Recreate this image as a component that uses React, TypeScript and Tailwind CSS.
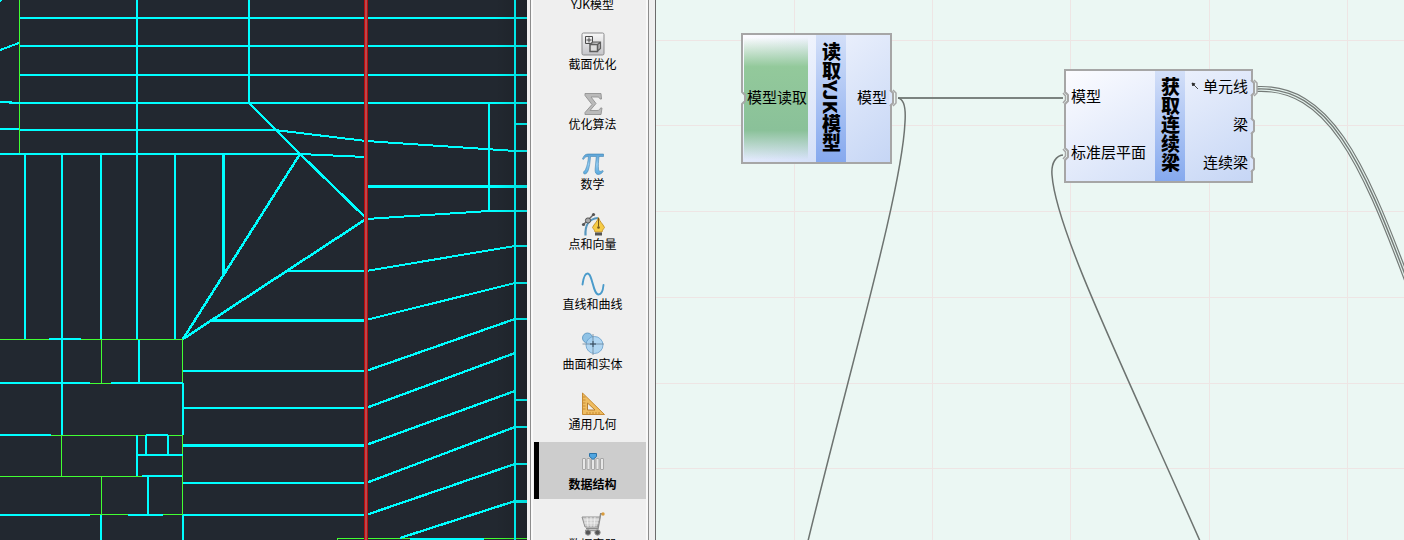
import type { ReactNode } from "react";

type Segment = [number, number, number, number, number?];

const cyanLines: Segment[] = [
  [20, 18, 527, 18], [20, 46, 527, 46], [20, 75, 527, 75], [9, 103, 527, 103], [0, 102, 12, 102],
  [0, 129, 19, 129], [20, 130, 275, 130], [0, 154, 300, 154],
  [25, 154, 25, 339], [62, 154, 62, 435], [101, 154, 101, 339], [137, 0, 137, 339], [175, 154, 175, 339],
  [223.5, 154, 223.5, 274, 3], [249, 0, 249, 103],
  [0, 50, 19, 43], [0, 1, 2, 0],
  [249, 103, 300, 154, 2.5], [300, 154, 366, 218, 2.5], [275, 130, 366, 141], [366, 141, 515, 151], [515, 151, 527, 151],
  [300, 154, 366, 157], [183, 339, 300, 154, 2.5], [183, 339, 366, 219, 2.5],
  [287, 271, 366, 271], [366, 271, 515, 246], [515, 246, 527, 246],
  [211, 320.5, 366, 320.5, 3], [366, 320, 515, 283], [515, 283, 527, 283],
  [183, 371, 366, 371], [366, 371, 515, 319, 2.3], [515, 319, 527, 319],
  [183, 408, 366, 408], [366, 408, 515, 353, 2.3],
  [183, 445.5, 366, 445.5, 3], [366, 445, 515, 391, 2.3], [515, 400, 527, 400],
  [183, 483, 366, 483], [366, 483, 515, 427, 2.3], [515, 427, 527, 427],
  [183, 515, 366, 515], [366, 515, 515, 464, 2.3], [515, 464, 527, 464],
  [400, 538, 515, 501, 2.3], [515, 501.5, 527, 501.5, 3],
  [515, 0, 515, 540], [489, 103, 489, 211], [515, 124, 527, 124], [367, 186.5, 527, 186.5, 3],
  [366, 219, 489, 211], [489, 211, 527, 211],
  [49, 339, 81, 339], [139, 340, 139, 383], [0, 383, 90, 383], [111, 383, 183, 383], [183, 383, 183, 435],
  [0, 435, 51, 435], [146, 435, 168, 435], [146, 435, 146, 455], [168, 435, 168, 455], [137, 435, 137, 476],
  [137, 455, 183, 455], [142, 476, 182, 476], [148, 476, 148, 515], [0, 515, 90, 515], [128, 515, 163, 515],
  [101, 515, 101, 540], [183, 515, 183, 540], [410, 539, 484, 539],
];

const greenLines: Segment[] = [
  [19.5, 0, 19.5, 153], [0, 339.5, 183, 339.5], [101.5, 339, 101.5, 383], [182.5, 339, 182.5, 383],
  [90, 383.5, 111, 383.5], [51, 435.5, 183, 435.5], [61.5, 435, 61.5, 476], [182.5, 435, 182.5, 515],
  [0, 476.5, 142, 476.5], [101.5, 476, 101.5, 515], [0, 514.5, 183, 514.5], [337, 538.5, 527, 538.5],
  [337.5, 538, 337.5, 540],
];

function DrawingView() {
  return (
    <section aria-label="CAD" className="relative min-w-0 flex-[527] overflow-hidden bg-[#222830]">
      <svg className="block h-full w-full" shapeRendering="crispEdges">
        <g stroke="#42ff32" strokeWidth="1">
          {greenLines.map(([x1, y1, x2, y2], i) => (
            <line key={i} x1={x1} y1={y1} x2={x2} y2={y2} />
          ))}
        </g>
        <g stroke="#00ffff">
          {cyanLines.map(([x1, y1, x2, y2, w], i) => (
            <line key={i} x1={x1} y1={y1} x2={x2} y2={y2} strokeWidth={w ?? 2} />
          ))}
        </g>
        <rect x="364" y="0" width="4" height="100%" fill="#bd0a0c" />
        <rect x="365" y="0" width="2" height="100%" fill="#b8494c" />
      </svg>
      <div className="absolute inset-y-0 right-0 w-8 bg-linear-to-r from-transparent to-black/15" />
    </section>
  );
}

const icons: Record<string, ReactNode> = {
  section: (
    <>
      <defs>
        <linearGradient id="sec" x2="0" y2="1"><stop stopColor="#f8f8f8" /><stop offset="1" stopColor="#c4c4c8" /></linearGradient>
      </defs>
      <rect x="1" y="1" width="22" height="22" rx="1.5" fill="url(#sec)" stroke="#8b8b8d" />
      <path d="M4.500 4.500h7v7h-7zM8 5.500v5M5.500 8h5" fill="none" stroke="#4c4c4c" />
      <path d="M9 12.500l2.500-2.500h8v6.500l-3 2.500v-6.500l3-2.500" fill="#b4b4b4" stroke="#5e5e5e" strokeWidth="1.200" />
      <path d="M9 12.500h7.500v7H9z" fill="#ddd" stroke="#5e5e5e" strokeWidth="1.500" />
    </>
  ),
  sigma: (
    <path d="M4 1.500h16l.5 5.500h-1.500c-.5-1.600-1-2-3-2H10l5 6.500-6 7h7c2 0 3-.8 3.500-2.500H21L20 22.500H4v-2l7-8-7-9z" fill="#bababa" stroke="#929292" strokeWidth=".9" />
  ),
  pi: (
    <>
      <defs>
        <linearGradient id="pi" x2="0" y2="1"><stop stopColor="#5aa2d6" /><stop offset=".5" stopColor="#92cbf2" /><stop offset="1" stopColor="#58a8dc" /></linearGradient>
      </defs>
      <path d="M1.500 7C3 3 4.500 2 8 2h14.500v2.500H18c-.6 5-.8 9-.5 12.500 .2 2.500 1.700 3 4.300 1.500l.4 1c-1.600 2.200-3.300 3-4.800 3-2.500 0-3.400-2-3.300-5L15.300 4.500H9.500c-.4 5.500-1 10.500-2.500 14.500-1.200 3.300-4.500 4-4.500 1.600 0-1.300 1.300-1.600 2-3C6.200 14 7 10 7.500 4.500 4.800 4.500 3.600 5.500 2.500 7.400z" fill="url(#pi)" stroke="#4285b2" strokeWidth=".6" />
    </>
  ),
  pen: (
    <>
      <path d="M4.500 23.500C4 13 7 7 17 6" fill="none" stroke="#5796bd" strokeWidth="2.200" />
      <path d="M2 13L13 2" stroke="#666" strokeWidth="1.500" />
      <circle cx="2.500" cy="12.500" r="1.600" fill="#555" /><circle cx="12.500" cy="2.500" r="1.600" fill="#555" />
      <circle cx="7" cy="8.500" r="2.600" fill="#aaa" stroke="#555" />
      <path d="M17.500 5.500c-1 4-4.500 6.500-6 10 1 1.500 2 2.500 2.500 4.500h7c.5-2 1.500-3 2.500-4.500-1.500-3.500-5-6-6-10z" fill="#f6cb45" stroke="#c3922a" strokeWidth=".9" />
      <path d="M17.500 6v8.500" stroke="#73571a" /><circle cx="17.500" cy="15.500" r="1.300" fill="#73571a" />
      <path d="M14 20.500h7v3h-7z" fill="#555" />
    </>
  ),
  wave: <path d="M1.500 12.500C2.500 5 4.500 1.500 6.500 1.500 11.500 1.500 12 22.500 17.500 22.500c3 0 4.500-4 5-9.500" fill="none" stroke="#4a9bcb" strokeWidth="1.900" strokeLinecap="round" />,
  solid: (
    <>
      <circle cx="6.500" cy="6" r="5" fill="#8fc2e5" stroke="#5590bd" strokeWidth=".8" />
      <circle cx="13.500" cy="13" r="8.500" fill="#a9d3f2" fillOpacity=".9" stroke="#659dca" strokeWidth=".8" />
      <path d="M12 2v21M1.500 12h21.500" stroke="#6d8799" strokeWidth=".8" />
      <path d="M9 12h6M12 9v6" stroke="#344b5c" />
    </>
  ),
  triangle: (
    <>
      <path d="M1.500 1v21.500H23.500z" fill="#efbd61" stroke="#c78b34" />
      <path d="M6.500 11v7H14z" fill="#efefef" stroke="#b97f2f" />
      <path d="M2 5h2.500M2 8h2.500M2 11h2.500M2 14h2.500M2 17h2.500M6 20v2M9 20v2M12 20v2M15 20v2M18 20v2" stroke="#c78b34" />
    </>
  ),
  data: (
    <>
      <g fill="#e8e8e8" stroke="#999" strokeWidth=".8">
        <rect x="1.500" y="6.500" width="3" height="11" rx=".5" /><rect x="6" y="6.500" width="3" height="11" rx=".5" />
        <rect x="10.500" y="6.500" width="3" height="11" rx=".5" /><rect x="15" y="6.500" width="3" height="11" rx=".5" />
        <rect x="19.500" y="6.500" width="3" height="11" rx=".5" />
      </g>
      <path d="M8.500 1.500h7v3L12 7.500 8.500 4.500z" fill="#50a5e0" stroke="#2b73a8" />
    </>
  ),
  cart: (
    <>
      <path d="M21.500 1.800h-1.800L17 16.500H5" fill="none" stroke="#8b8b8b" strokeWidth="1.500" />
      <path d="M1 5h18l-2.500 10H4z" fill="#d0d0d0" stroke="#919191" />
      <path d="M3 8h15M3.500 11h14M6 5l1 10M10 5v10M14 5l-1 10" stroke="#f4f4f4" strokeWidth=".8" />
      <path d="M4 18.500h14" stroke="#999" strokeWidth="1.500" />
      <circle cx="7" cy="20.500" r="2.700" fill="#555" stroke="#999" /><circle cx="16.500" cy="20.500" r="2.700" fill="#555" stroke="#999" />
      <circle cx="22" cy="2" r="1.700" fill="#d99b3b" />
    </>
  ),
};

const categories = [
  { label: "YJK模型", icon: "section" },
  { label: "截面优化", icon: "section" },
  { label: "优化算法", icon: "sigma" },
  { label: "数学", icon: "pi" },
  { label: "点和向量", icon: "pen" },
  { label: "直线和曲线", icon: "wave" },
  { label: "曲面和实体", icon: "solid" },
  { label: "通用几何", icon: "triangle" },
  { label: "数据结构", icon: "data", active: true },
  { label: "数据容器", icon: "cart" },
];

function Sidebar() {
  return (
    <aside className="flex w-[129px] shrink-0 overflow-hidden border-r border-[#6b6b6b] bg-[#efefef] pr-[6px] pl-[3px]">
      <nav className="min-w-0 flex-1 overflow-hidden border-x border-[#8c8c8c]">
        <ul className="-mt-[38px] flex flex-col gap-[3px] border-x-2 border-[#f9f9f9] pl-px">
          {categories.map((c) => (
            <li key={c.label}>
              <button
                type="button"
                className={
                  c.active
                    ? "flex h-[57px] w-full flex-col items-center border-l-[5px] border-black bg-[#cdcdcd] pt-[10px] font-bold"
                    : "flex h-[57px] w-full flex-col items-center border-l-[5px] border-transparent pt-[10px]"
                }
              >
                <svg width="24" height="24" viewBox="0 0 24 24" aria-hidden="true">
                  {icons[c.icon]}
                </svg>
                <span className="text-xs leading-4 whitespace-nowrap">{c.label}</span>
              </button>
            </li>
          ))}
        </ul>
      </nav>
    </aside>
  );
}

const gridX = [138, 276, 414, 553, 691];
const gridY = [40, 125, 211, 297, 383, 468];

function Wires() {
  return (
    <svg className="absolute inset-0 h-full w-full" aria-hidden="true">
      <g stroke="#eee5e4" shapeRendering="crispEdges">
        {gridX.map((x) => <line key={x} x1={x} y1="0" x2={x} y2="100%" />)}
        {gridY.map((y) => <line key={y} x1="0" y1={y} x2="100%" y2={y} />)}
      </g>
      <g fill="none" stroke="#7b837f" strokeWidth="2">
        <path d="M242 98H409" />
        <path d="M242 98C248 99 250 107 249 122 C246 190 196 360 152 541" stroke="#6d7370" strokeWidth="1.500" />
        <path d="M408 155C400 155 395 163 396 175C400 230 464 360 544 541" stroke="#6d7370" strokeWidth="1.500" />
      </g>
      <g fill="none">
        <path d="M601 89C672 86 706 160 751 280" stroke="#747a77" strokeWidth="6" />
        <path d="M601 89C672 86 706 160 751 280" stroke="#e4f2ed" strokeWidth="3.600" />
        <path d="M601 89C672 86 706 160 751 280" stroke="#747a77" strokeWidth="1.400" />
      </g>
    </svg>
  );
}

function PortIn({ x, y, linked }: { x: number; y: number; linked?: boolean }) {
  return (
    <g fill="none" stroke="#a6a6a6" strokeWidth="2" strokeLinejoin="round">
      <path d={`M${x - 2} ${y - 6}h2.500l2.500 3v6l-2.500 3h-2.500z`} fill="#ebf7f3" stroke="none" />
      <path d={`M${x} ${y - 7}v1l3 3v6l-3 3v1`} />
      {linked && <path d={`M${x - 2} ${y - 5}l2.500 3v4l-2.500 3`} strokeWidth="1.500" />}
    </g>
  );
}

function PortOut({ x, y, linked }: { x: number; y: number; linked?: boolean }) {
  return (
    <g fill="none" stroke="#a6a6a6" strokeWidth="2" strokeLinejoin="round">
      <path d={`M${x - 1} ${y - 8}l4 3v10l-4 3z`} fill="#dbe6fb" stroke="none" />
      <path d={`M${x} ${y - 8}l3 3v10l-3 3`} />
      {linked && <path d={`M${x + 3} ${y - 8}l3 3v10l-3 3`} strokeWidth="1.500" />}
    </g>
  );
}

function Ports() {
  return (
    <svg className="pointer-events-none absolute inset-0 h-full w-full" aria-hidden="true">
      <PortIn x={86} y={98} />
      <PortOut x={234} y={98} linked />
      <PortIn x={409} y={98} linked />
      <PortIn x={409} y={154} linked />
      <PortOut x={595} y={88} linked />
      <PortOut x={595} y={126} />
      <PortOut x={595} y={164} />
    </svg>
  );
}

function NodeTitle({ children }: { children: ReactNode }) {
  return (
    <h2 className="flex w-[30px] shrink-0 items-center justify-center bg-linear-to-b from-[#d3dff8] to-[#86a9ee] pb-[3px] text-[19px] leading-[30px] font-black whitespace-nowrap [writing-mode:vertical-rl]">
      {children}
    </h2>
  );
}

const nodeFrame = "absolute flex border-2 border-[#a6a6a6] bg-linear-to-br from-[#fcfcff] to-[#c6d6f5] text-[15px] leading-5";

function Canvas() {
  return (
    <main className="relative min-w-0 flex-[748] overflow-hidden bg-[#ebf7f3]">
      <Wires />
      <article className={`${nodeFrame} top-[33px] left-[85px] h-[131px] w-[151px]`}>
        <div className="flex flex-1 pl-px">
          <div className="flex w-16 items-center justify-end bg-linear-to-b from-transparent from-2% via-[#8fc698] via-25% to-transparent to-98% pr-px pb-1 whitespace-nowrap [background-image:linear-gradient(to_bottom,transparent_2%,#93c99b_25%,#8ac199_75%,transparent_98%)]">
            模型读取
          </div>
        </div>
        <NodeTitle>读取YJK模型</NodeTitle>
        <div className="flex w-11 items-center justify-end pr-[3px] pb-1">模型</div>
      </article>
      <article className={`${nodeFrame} top-[69px] left-[408px] h-[114px] w-[189px]`}>
        <div className="flex flex-1 flex-col justify-between pt-[15px] pb-[19px] pl-[5px]">
          <span>模型</span>
          <span>标准层平面</span>
        </div>
        <NodeTitle>获取连续梁</NodeTitle>
        <div className="flex w-[66px] flex-col items-end justify-between pt-[5px] pr-[3px] pb-[9px]">
          <span className="flex items-center gap-1">
            <svg width="8" height="8" viewBox="0 0 8 8" aria-hidden="true">
              <path d="M1 1l3 .8-2.200 2.200zM2 2l5 5" fill="#222" stroke="#222" strokeWidth=".8" />
            </svg>
            单元线
          </span>
          <span>梁</span>
          <span>连续梁</span>
        </div>
      </article>
      <Ports />
    </main>
  );
}

export default function App() {
  return (
    <div className="flex h-screen overflow-hidden bg-[#efefef] font-['Noto_Sans_CJK_SC',sans-serif] text-black">
      <DrawingView />
      <Sidebar />
      <Canvas />
    </div>
  );
}
